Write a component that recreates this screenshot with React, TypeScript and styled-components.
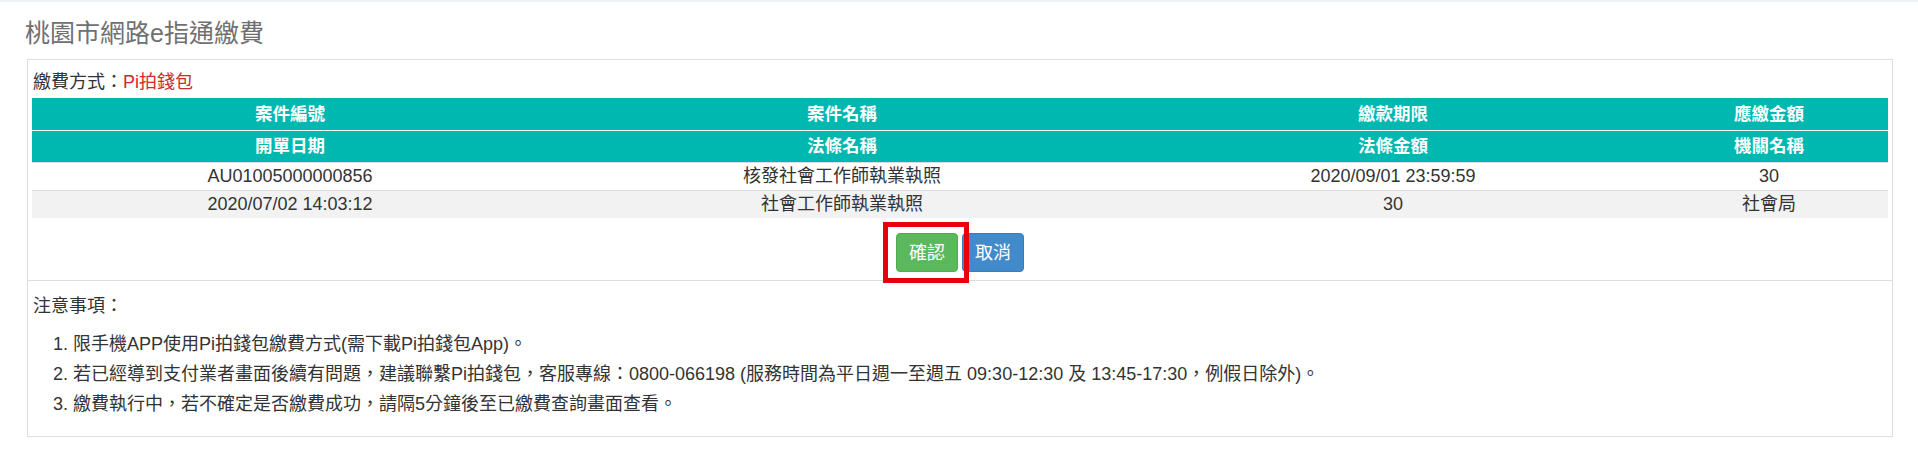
import React from "react";
import styled, { createGlobalStyle } from "styled-components";

type CaseRow = {
  cells: string[];
};

const headRows = [
  ["案件編號", "案件名稱", "繳款期限", "應繳金額"],
  ["開單日期", "法條名稱", "法條金額", "機關名稱"],
];

const dataRows: CaseRow[] = [
  { cells: ["AU01005000000856", "核發社會工作師執業執照", "2020/09/01 23:59:59", "30"] },
  { cells: ["2020/07/02 14:03:12", "社會工作師執業執照", "30", "社會局"] },
];

const colWidths = [516, 588, 514, 238];

const notices = [
  "限手機APP使用Pi拍錢包繳費方式(需下載Pi拍錢包App)。",
  "若已經導到支付業者畫面後續有問題，建議聯繫Pi拍錢包，客服專線：0800-066198 (服務時間為平日週一至週五 09:30-12:30 及 13:45-17:30，例假日除外)。",
  "繳費執行中，若不確定是否繳費成功，請隔5分鐘後至已繳費查詢畫面查看。",
];

// #region Styled components

const GlobalStyle = createGlobalStyle`
  html, body {
    margin: 0;
    padding: 0;
    background: #fff;
  }
  body {
    font-family: "Liberation Sans", "Noto Sans CJK TC", sans-serif;
    font-size: 18px;
    color: #333;
  }
`;

const Page = styled("div")`
  border-top: 2px solid #edf1f5;
  padding-top: 17px;
  padding-bottom: 25px;
`;

const Title = styled("h3")`
  margin: 0 0 12px 25px;
  font-size: 25px;
  line-height: 28px;
  font-weight: 400;
  color: #707070;
`;

const Panel = styled("div")`
  margin: 0 25px 0 27px;
  border: 1px solid #ddd;
`;

const PaySection = styled("div")`
  padding: 10px 4px 8px;
`;

const MethodLine = styled("div")`
  padding-left: 1px;
  margin-bottom: 4px;
  line-height: 24px;
`;

const MethodValue = styled("span")`
  color: #cf2a2a;
`;

const CaseTable = styled("table")`
  width: 100%;
  table-layout: fixed;
  border-collapse: separate;
  border-spacing: 0;
`;

const HeadCell = styled("th")<{ $divided?: boolean }>`
  background: #00b8b0;
  color: #fff;
  font-weight: 700;
  font-size: 17.5px;
  text-align: center;
  line-height: 24px;
  padding: ${(p) => (p.$divided ? "3px 8px 4px" : "4px 8px")};
  border-top: ${(p) => (p.$divided ? "1px solid #fff" : "none")};
`;

const DataCell = styled("td")<{ $striped?: boolean }>`
  background: ${(p) => (p.$striped ? "#f2f2f2" : "#fff")};
  text-align: center;
  line-height: 24px;
  padding: 1px 8px 2px;
  border-top: 1px solid #ddd;
  white-space: nowrap;
`;

const ButtonRow = styled("div")`
  margin-top: 15px;
  display: flex;
  justify-content: center;
  gap: 4px;
`;

const Highlight = styled("span")`
  position: relative;
  display: inline-flex;
`;

const HighlightFrame = styled("span")`
  position: absolute;
  top: -11px;
  bottom: -11px;
  left: -13px;
  right: -11px;
  border: 5px solid #e8000b;
  pointer-events: none;
`;

const Button = styled("button")<{ $tone: "success" | "primary" }>`
  height: 39px;
  padding: 0 12px;
  border-radius: 4px;
  border: 1px solid ${(p) => (p.$tone === "success" ? "#4cae4c" : "#357ebd")};
  background: ${(p) => (p.$tone === "success" ? "#5cb85c" : "#428bca")};
  color: #fff;
  font-family: inherit;
  font-size: 18px;
  line-height: 24px;
  cursor: pointer;
`;

const NoticeSection = styled("div")`
  border-top: 1px solid #ddd;
  padding: 10px 5px 17px;
`;

const NoticeTitle = styled("div")`
  line-height: 30px;
`;

const NoticeList = styled("ol")`
  margin: 8px 0 0;
  padding-left: 40px;
  line-height: 30px;
`;

// #endregion

const App = () => {
  return (
    <Page>
      <GlobalStyle />
      <Title>桃園市網路e指通繳費</Title>
      <Panel>
        <PaySection>
          <MethodLine>
            繳費方式：<MethodValue>Pi拍錢包</MethodValue>
          </MethodLine>
          <CaseTable>
            <colgroup>
              {colWidths.map((w, i) => (
                <col key={i} style={{ width: w }} />
              ))}
            </colgroup>
            <thead>
              {headRows.map((row, r) => (
                <tr key={r}>
                  {row.map((label) => (
                    <HeadCell key={label} $divided={r > 0}>
                      {label}
                    </HeadCell>
                  ))}
                </tr>
              ))}
            </thead>
            <tbody>
              {dataRows.map((row, r) => (
                <tr key={r}>
                  {row.cells.map((cell, c) => (
                    <DataCell key={c} $striped={r % 2 === 1}>
                      {cell}
                    </DataCell>
                  ))}
                </tr>
              ))}
            </tbody>
          </CaseTable>
          <ButtonRow>
            <Highlight>
              <Button $tone="success">確認</Button>
              <HighlightFrame />
            </Highlight>
            <Button $tone="primary">取消</Button>
          </ButtonRow>
        </PaySection>
        <NoticeSection>
          <NoticeTitle>注意事項：</NoticeTitle>
          <NoticeList>
            {notices.map((text) => (
              <li key={text}>{text}</li>
            ))}
          </NoticeList>
        </NoticeSection>
      </Panel>
    </Page>
  );
};

export default App;
